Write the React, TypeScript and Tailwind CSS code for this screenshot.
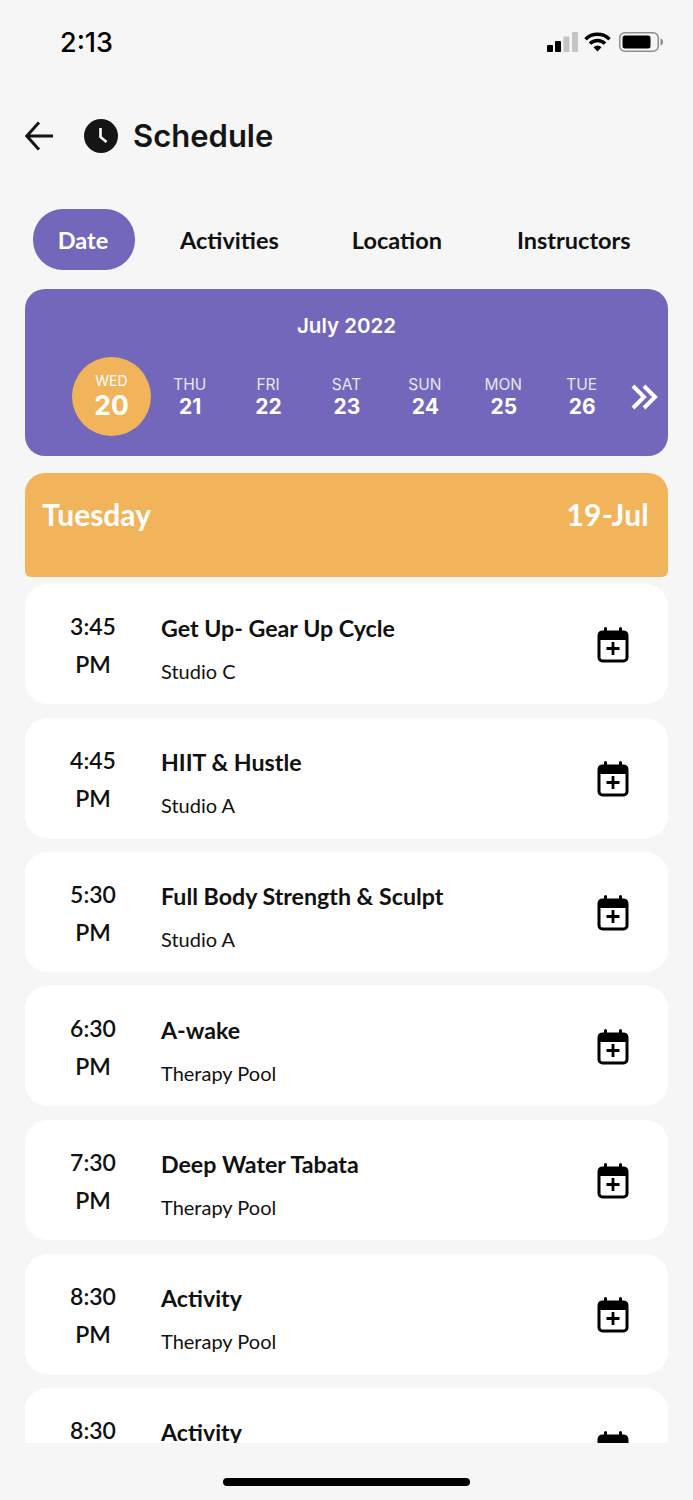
import React from "react";

const days = [
  { name: "THU", num: "21" },
  { name: "FRI", num: "22" },
  { name: "SAT", num: "23" },
  { name: "SUN", num: "24" },
  { name: "MON", num: "25" },
  { name: "TUE", num: "26" },
];

const classes = [
  { time: "3:45", title: "Get Up- Gear Up Cycle", place: "Studio C" },
  { time: "4:45", title: "HIIT & Hustle", place: "Studio A" },
  { time: "5:30", title: "Full Body Strength & Sculpt", place: "Studio A" },
  { time: "6:30", title: "A-wake", place: "Therapy Pool" },
  { time: "7:30", title: "Deep Water Tabata", place: "Therapy Pool" },
  { time: "8:30", title: "Activity", place: "Therapy Pool" },
  { time: "8:30", title: "Activity", place: "Therapy Pool" },
];

const CalendarPlus = () => (
  <svg width="32" height="36" viewBox="0 0 32 36" fill="none">
    <path d="M8.5 1.5v5M23.5 1.5v5" stroke="#000" strokeWidth="3" strokeLinecap="round" />
    <path d="M5 4h22a4 4 0 0 1 4 4v5H1V8a4 4 0 0 1 4-4z" fill="#000" />
    <rect x="2" y="5" width="28" height="29" rx="3.5" stroke="#000" strokeWidth="3" />
    <path d="M16 15v13M9.5 21.5h13" stroke="#000" strokeWidth="2.8" />
  </svg>
);

const StatusIcons = () => (
  <div className="flex items-center">
    <svg width="31" height="20" viewBox="0 0 31 20" className="mr-[6px]">
      <rect x="0" y="13" width="6" height="7" rx="1" fill="#000" />
      <rect x="8" y="9" width="6" height="11" rx="1" fill="#000" />
      <rect x="16.5" y="4.5" width="6" height="15.5" rx="1" fill="#c4c4c4" />
      <rect x="25" y="0" width="6" height="20" rx="1" fill="#c4c4c4" />
    </svg>
    <svg width="27" height="20" viewBox="0 0 27 20" className="mr-[8px]" fill="none" stroke="#000" strokeWidth="3.4">
      <path d="M1.5 7.2a17 17 0 0 1 24 0" />
      <path d="M6 11.6a10.6 10.6 0 0 1 15 0" />
      <path d="M13.5 19.5l-4-4.2a5.6 5.6 0 0 1 8 0z" fill="#000" stroke="none" />
    </svg>
    <svg width="45" height="20" viewBox="0 0 45 20">
      <rect x="0.75" y="0.75" width="38.5" height="18.5" rx="5" fill="none" stroke="#8e8e8e" strokeWidth="1.5" />
      <rect x="3.5" y="3.5" width="28" height="13" rx="2.5" fill="#000" />
      <path d="M41.5 6.5c1.6.5 2.6 1.8 2.6 3.5s-1 3-2.6 3.5z" fill="#8e8e8e" />
    </svg>
  </div>
);

export default function App() {
  return (
    <div className="h-[1500px] w-[693px] overflow-hidden bg-[#f6f6f6] flex flex-col font-['Lato',sans-serif] text-[#111]">
      {/* status bar */}
      <div className="h-[84px] flex items-center justify-between pl-[60px] pr-[29px]">
        <span className="font-['Inter',sans-serif] font-medium text-[27px] leading-none text-black">2:13</span>
        <StatusIcons />
      </div>

      {/* header */}
      <div className="h-[104px] flex items-center pl-[25px] pb-[1px]">
        <svg width="28" height="30" viewBox="0 0 28 30" fill="none" stroke="#151515" strokeWidth="3" strokeLinecap="square">
          <path d="M13 2.5L1.8 15 13 27.5M2.5 15h24" />
        </svg>
        <svg width="34" height="34" viewBox="0 0 34 34" className="ml-[31px]">
          <circle cx="17" cy="17" r="17" fill="#151515" />
          <path d="M16.5 9v9l6 5" fill="none" stroke="#fff" strokeWidth="2.6" />
        </svg>
        <span className="ml-[15px] font-['Inter',sans-serif] font-semibold text-[31px] leading-none text-[#151515]">Schedule</span>
      </div>

      {/* tabs */}
      <div className="mt-[21px] h-[61px] flex items-center pl-[33px] text-[23.5px] font-bold">
        <div className="w-[102px] h-[61px] rounded-[30px] bg-[#7367bb] text-white flex items-center justify-center pt-[3px] pr-[2px]">Date</div>
        <span className="ml-[45px] mt-[3px]">Activities</span>
        <span className="ml-[73px] mt-[3px]">Location</span>
        <span className="ml-[75px] mt-[3px]">Instructors</span>
      </div>

      {/* calendar */}
      <div className="mt-[19px] mx-[25px] h-[167px] rounded-[20px] bg-[#7367bb] text-white font-['Inter',sans-serif] flex flex-col">
        <div className="mt-[25px] text-center font-semibold text-[20.5px] leading-[24px]">July 2022</div>
        <div className="mt-[19px] flex items-center pl-[47px]">
          <div className="w-[79px] h-[79px] rounded-full bg-[#f2b45a] flex flex-col items-center justify-center">
            <span className="text-[14px] leading-[16px]">WED</span>
            <span className="text-[26.5px] leading-[32px] font-bold">20</span>
          </div>
          {days.map((d) => (
            <div key={d.name} className="w-[78.4px] flex flex-col items-center mt-[2px]">
              <span className="text-[15.5px] leading-[18px] text-[#e8e6f5] mr-[1px]">{d.name}</span>
              <span className="text-[21px] leading-[25px] font-bold">{d.num}</span>
            </div>
          ))}
          <svg width="28" height="26" viewBox="0 0 28 26" fill="none" stroke="#fff" strokeWidth="4" className="ml-[10px]">
            <path d="M2 2l11 11L2 24M13 2l11 11-11 11" />
          </svg>
        </div>
      </div>

      {/* selected day */}
      <div className="mt-[17px] mx-[25px] h-[104px] rounded-t-[20px] rounded-b-[6px] bg-[#f2b45a] text-white font-bold text-[30px] flex justify-between pl-[17px] pr-[19px] pt-[21px] leading-[40px]">
        <span>Tuesday</span>
        <span className="tracking-[0.2px]">19-Jul</span>
      </div>

      {/* class list, cut off above the home bar */}
      <div className="mt-[7px] mx-[25px] h-[859px] overflow-hidden flex flex-col gap-[14px]">
        {classes.map((c, i) => (
          <div key={i} className="h-[120px] shrink-0 rounded-[22px] bg-white flex relative">
            <div className="w-[136px] shrink-0 flex flex-col items-center pt-[23px] font-semibold text-[23px] leading-[38px]">
              <span>{c.time}</span>
              <span>PM</span>
            </div>
            <div className="pt-[27px]">
              <div className="font-bold text-[23.2px] leading-[34px]">{c.title}</div>
              <div className="mt-[13px] text-[20px] leading-[26px]">{c.place}</div>
            </div>
            <div className="absolute right-[39px] top-[43px]">
              <CalendarPlus />
            </div>
          </div>
        ))}
      </div>

      {/* home indicator */}
      <div className="mt-[35px] mx-auto w-[247px] h-[8px] rounded-full bg-black" />
    </div>
  );
}
